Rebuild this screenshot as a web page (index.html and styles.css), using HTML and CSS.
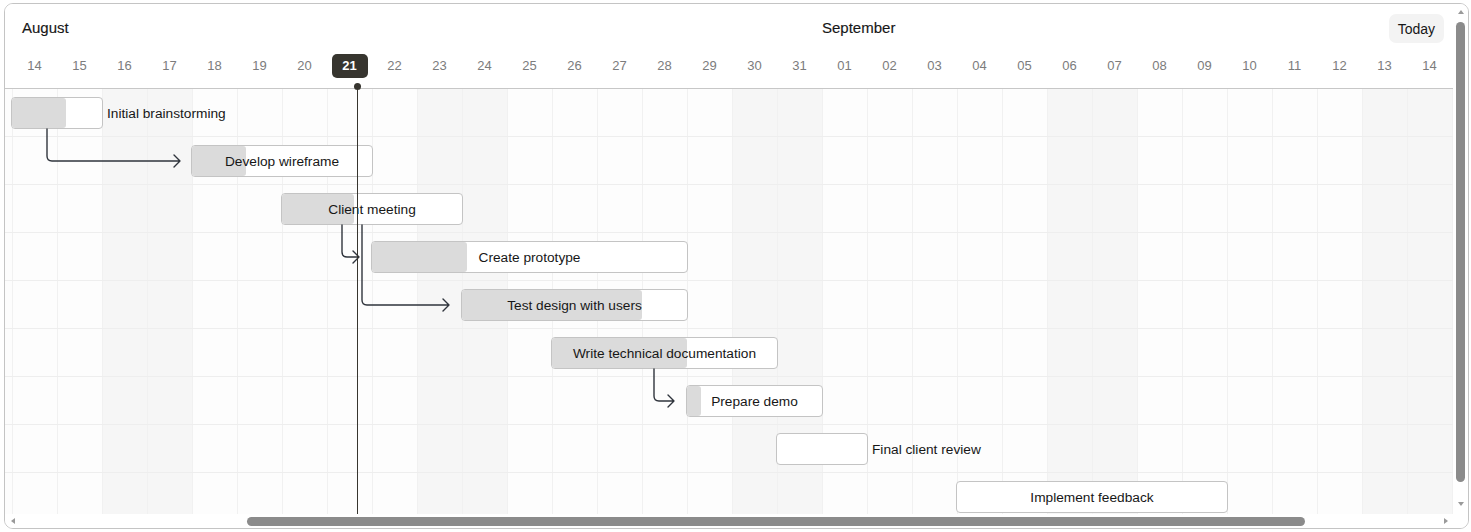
FILE: index.html
```html
<!DOCTYPE html>
<html lang="en">
<head>
<meta charset="utf-8">
<title>Gantt</title>
<link rel="stylesheet" href="styles.css">
</head>
<body>
<div class="gantt">
  <div class="viewport">
    <div class="chart">
      <div class="header">
        <div class="months">
          <div class="month month-aug">August</div>
          <div class="month">September</div>
        </div>
        <div class="days">
          <div class="day"></div>
          <div class="day"><span>14</span></div>
          <div class="day"><span>15</span></div>
          <div class="day"><span>16</span></div>
          <div class="day"><span>17</span></div>
          <div class="day"><span>18</span></div>
          <div class="day"><span>19</span></div>
          <div class="day"><span>20</span></div>
          <div class="day day-current"><span>21</span></div>
          <div class="day"><span>22</span></div>
          <div class="day"><span>23</span></div>
          <div class="day"><span>24</span></div>
          <div class="day"><span>25</span></div>
          <div class="day"><span>26</span></div>
          <div class="day"><span>27</span></div>
          <div class="day"><span>28</span></div>
          <div class="day"><span>29</span></div>
          <div class="day"><span>30</span></div>
          <div class="day"><span>31</span></div>
          <div class="day"><span>01</span></div>
          <div class="day"><span>02</span></div>
          <div class="day"><span>03</span></div>
          <div class="day"><span>04</span></div>
          <div class="day"><span>05</span></div>
          <div class="day"><span>06</span></div>
          <div class="day"><span>07</span></div>
          <div class="day"><span>08</span></div>
          <div class="day"><span>09</span></div>
          <div class="day"><span>10</span></div>
          <div class="day"><span>11</span></div>
          <div class="day"><span>12</span></div>
          <div class="day"><span>13</span></div>
          <div class="day"><span>14</span></div>
          <div class="day"></div>
        </div>
      </div>
      <div class="body">
        <div class="cols">
          <div class="col"></div><div class="col"></div><div class="col"></div>
          <div class="col we"></div><div class="col we"></div>
          <div class="col"></div><div class="col"></div><div class="col"></div><div class="col"></div><div class="col"></div>
          <div class="col we"></div><div class="col we"></div>
          <div class="col"></div><div class="col"></div><div class="col"></div><div class="col"></div><div class="col"></div>
          <div class="col we"></div><div class="col we"></div>
          <div class="col"></div><div class="col"></div><div class="col"></div><div class="col"></div><div class="col"></div>
          <div class="col we"></div><div class="col we"></div>
          <div class="col"></div><div class="col"></div><div class="col"></div><div class="col"></div><div class="col"></div>
          <div class="col we"></div><div class="col we"></div>
          <div class="col"></div>
        </div>
        <div class="rows">
          <div class="row">
            <div class="bar" style="margin-left:44px;width:92px"><div class="prog" style="width:54px"></div></div>
            <div class="out">Initial brainstorming</div>
          </div>
          <div class="row">
            <div class="bar" style="margin-left:224px;width:182px"><div class="prog" style="width:54px"></div><div class="label">Develop wireframe</div></div>
          </div>
          <div class="row">
            <div class="bar" style="margin-left:314px;width:182px"><div class="prog" style="width:72px"></div><div class="label">Client meeting</div></div>
          </div>
          <div class="row">
            <div class="bar" style="margin-left:404px;width:317px"><div class="prog" style="width:94.5px"></div><div class="label">Create prototype</div></div>
          </div>
          <div class="row">
            <div class="bar" style="margin-left:494px;width:227px"><div class="prog" style="width:180px"></div><div class="label">Test design with users</div></div>
          </div>
          <div class="row">
            <div class="bar" style="margin-left:584px;width:227px"><div class="prog" style="width:135px"></div><div class="label">Write technical documentation</div></div>
          </div>
          <div class="row">
            <div class="bar" style="margin-left:719px;width:137px"><div class="prog" style="width:13.5px"></div><div class="label">Prepare demo</div></div>
          </div>
          <div class="row">
            <div class="bar" style="margin-left:809px;width:92px"></div>
            <div class="out">Final client review</div>
          </div>
          <div class="row">
            <div class="bar" style="margin-left:989px;width:272px"><div class="label">Implement feedback</div></div>
          </div>
        </div>
        <svg class="arrows" width="1530" height="432" viewBox="0 0 1530 432">
          <path d="M80 40 V67 Q80 72 85 72 H213 M207 66 L213 72 L207 78"/>
          <path d="M375 136 V163 Q375 168 380 168 H392 M386 162 L392 168 L386 174"/>
          <path d="M395 136 V211 Q395 216 400 216 H482 M476 210 L482 216 L476 222"/>
          <path d="M687 280 V307 Q687 312 692 312 H707 M701 306 L707 312 L701 318"/>
        </svg>
      </div>
      <div class="today-line"></div>
    </div>
    <button class="today-btn" type="button">Today</button>
  </div>
  <div class="vscroll">
    <div class="sb-btn"><span class="tri-up"></span></div>
    <div class="vthumb"></div>
    <div class="sb-fill"></div>
    <div class="sb-btn sb-down"><span class="tri-down"></span></div>
  </div>
  <div class="hscroll">
    <div class="sb-btn"><span class="tri-left"></span></div>
    <div class="hthumb"></div>
    <div class="sb-fill"></div>
    <div class="sb-btn"><span class="tri-right"></span></div>
  </div>
  <div class="corner"></div>
</div>
</body>
</html>
```
FILE: styles.css
```css
* { box-sizing: border-box; }

body {
  margin: 0;
  background: #fff;
  font-family: "Liberation Sans", Arial, sans-serif;
  color: #171717;
}

.gantt {
  margin: 3px 0 0 4px;
  width: 1465px;
  height: 526px;
  border: 1px solid #c4c4c4;
  border-radius: 9px;
  overflow: hidden;
  display: grid;
  grid-template-columns: 1448px 15px;
  grid-template-rows: 510px 14px;
  background: #fff;
}

.viewport {
  position: relative;
  overflow: hidden;
}

.chart {
  position: relative;
  width: 1530px;
  margin-left: -38px;
}

/* header */
.header {
  background: #fff;
  border-bottom: 1px solid #c7c7c7;
}

.months {
  display: flex;
  padding: 14px 0 8px;
  font-size: 15px;
  line-height: 20px;
  color: #171717;
  -webkit-text-stroke: 0.15px #171717;
}

.month { flex: none; }

.month-aug {
  width: 855px;
  padding-left: 55px;
}

.days {
  display: flex;
  height: 42px;
  padding: 8px 0 10px;
}

.day {
  flex: none;
  width: 45px;
  display: flex;
  justify-content: center;
  font-size: 13px;
  line-height: 24px;
  color: #7c7c7c;
}

.day-current span {
  width: 36px;
  text-align: center;
  background: #37352f;
  color: #fff;
  font-weight: 700;
  border-radius: 5px;
}

/* body grid */
.body {
  position: relative;
  display: grid;
}

.cols {
  grid-area: 1 / 1;
  display: flex;
}

.col {
  flex: none;
  width: 45px;
  border-left: 1px solid #f1f1f1;
  background: #fdfdfd;
}

.col.we { background: #f6f6f6; }

.rows { grid-area: 1 / 1; }

.row {
  height: 48px;
  padding-top: 8px;
  border-bottom: 1px solid #eeeeee;
  display: flex;
  align-items: flex-start;
}

.bar {
  flex: none;
  height: 32px;
  display: grid;
  border: 1px solid #c4c4c4;
  border-radius: 4px;
  background: #fff;
}

.prog {
  grid-area: 1 / 1;
  justify-self: start;
  background: #dbdbdb;
  border-radius: 3px;
}

.label {
  grid-area: 1 / 1;
  align-self: center;
  justify-self: center;
  padding-top: 1px;
  font-size: 13.7px;
  line-height: 16px;
  white-space: nowrap;
  color: #171717;
}

.out {
  margin-left: 4px;
  padding-top: 2px;
  font-size: 13.7px;
  line-height: 29px;
  white-space: nowrap;
  color: #171717;
}

.arrows {
  position: absolute;
  left: 0;
  top: 0;
  overflow: visible;
  fill: none;
  stroke: #2f343c;
  stroke-width: 1.4;
  stroke-linecap: round;
  stroke-linejoin: round;
}

.today-line {
  position: absolute;
  left: 390px;
  top: 82px;
  bottom: 0;
  width: 1px;
  background: #37352f;
  z-index: 5;
}

.today-line::before {
  content: "";
  position: absolute;
  left: -3px;
  top: -3px;
  width: 7px;
  height: 7px;
  border-radius: 50%;
  background: #37352f;
}

.today-btn {
  position: absolute;
  top: 10px;
  right: 9px;
  height: 29px;
  padding: 2px 9px 0;
  border: 0;
  border-radius: 7px;
  background: #f3f3f3;
  font-family: "Liberation Sans", Arial, sans-serif;
  font-size: 14px;
  line-height: 27px;
  color: #171717;
}

/* scrollbars */
.vscroll {
  display: flex;
  flex-direction: column;
  align-items: center;
  background: #fff;
}

.hscroll {
  display: flex;
  align-items: center;
  background: #fff;
}

.corner { background: #fff; }

.sb-btn {
  flex: none;
  width: 15px;
  height: 16px;
  display: flex;
  align-items: center;
  justify-content: center;
}

.hscroll .sb-btn { height: 14px; }

.sb-down { margin-bottom: 2px; }

.sb-fill { flex: 1; }

.vthumb {
  flex: none;
  margin-top: 2px;
  width: 9px;
  height: 460px;
  border-radius: 5px;
  background: #8b8b8b;
}

.hthumb {
  flex: none;
  margin-left: 227px;
  width: 1058px;
  height: 9px;
  border-radius: 5px;
  background: #8b8b8b;
}

.tri-up, .tri-down, .tri-left, .tri-right {
  width: 0;
  height: 0;
}

.tri-up {
  border-left: 3px solid transparent;
  border-right: 3px solid transparent;
  border-bottom: 4px solid #9a9a9a;
}

.tri-down {
  border-left: 3px solid transparent;
  border-right: 3px solid transparent;
  border-top: 4px solid #9a9a9a;
}

.tri-left {
  border-top: 3px solid transparent;
  border-bottom: 3px solid transparent;
  border-right: 4px solid #9a9a9a;
}

.tri-right {
  border-top: 3px solid transparent;
  border-bottom: 3px solid transparent;
  border-left: 4px solid #9a9a9a;
}
```
